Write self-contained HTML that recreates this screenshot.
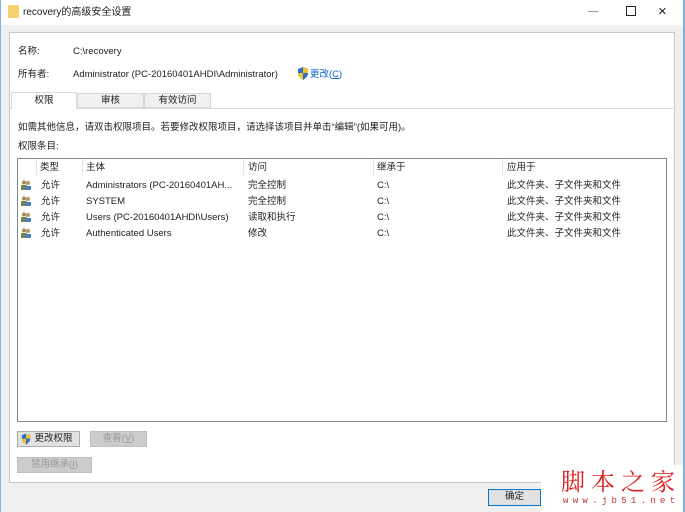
<!DOCTYPE html>
<html><head><meta charset="utf-8"><style>
*{margin:0;padding:0;box-sizing:border-box}
body{width:685px;height:512px;overflow:hidden;background:#f0f0f0;font-family:"Liberation Sans","Noto Sans CJK SC",sans-serif;font-size:9.5px;color:#222;position:relative}
.a{position:absolute;white-space:nowrap;line-height:15px}
.btn{position:absolute;border:1px solid #adadad;background:#e1e1e1;text-align:center;line-height:14px;font-size:9.5px}
.dis{color:#9a9a9a;background:#cccccc;border-color:#bfbfbf}
</style></head><body>
<div class="a" style="left:0;top:0;width:685px;height:25px;background:#fff"></div>
<div class="a" style="left:0;top:0;width:1px;height:512px;background:#7fb4e0"></div>
<div class="a" style="left:683px;top:0;width:2px;height:512px;background:#7fb4e0"></div>
<div class="a" style="left:8px;top:5px;width:11px;height:13px;background:#f5d06e;border-radius:1px"></div>
<div class="a" style="left:23px;top:5px;font-size:10px">recovery的高级安全设置</div>
<div class="a" style="left:588px;top:11px;width:10px;height:1px;background:#999"></div>
<div class="a" style="left:626px;top:6px;width:10px;height:10px;border:1px solid #222"></div>
<div class="a" style="left:658px;top:5px;font-size:15px;line-height:14px;color:#222">×</div>

<div class="a" style="left:9px;top:32px;width:666px;height:451px;background:#fff;border:1px solid #c8c8c8"></div>
<div class="a" style="left:18px;top:44px">名称:</div>
<div class="a" style="left:73px;top:44px">C:\recovery</div>
<div class="a" style="left:18px;top:67px">所有者:</div>
<div class="a" style="left:73px;top:67px">Administrator (PC-20160401AHDI\Administrator)</div>
<svg class="a" style="left:297px;top:67px" width="12" height="13" viewBox="0 0 12 13"><path d="M6 0L11 2V6C11 9 9 11 6 13C3 11 1 9 1 6V2Z" fill="#2a6fc9"/><path d="M6 0L11 2V6H6ZM6 6V13C3 11 1 9 1 6Z" fill="#f2c12e"/></svg>
<div class="a" style="left:310px;top:67px;color:#0a60c8">更改(<u>C</u>)</div>

<div class="a" style="left:10px;top:108px;width:665px;height:1px;background:#d9d9d9"></div>
<div class="a" style="left:11px;top:92px;width:66px;height:17px;background:#fff;border:1px solid #d9d9d9;border-bottom:none;text-align:center;line-height:15px">权限</div>
<div class="a" style="left:77px;top:93px;width:67px;height:15px;background:#f0f0f0;border:1px solid #d9d9d9;text-align:center;line-height:13px">审核</div>
<div class="a" style="left:144px;top:93px;width:67px;height:15px;background:#f0f0f0;border:1px solid #d9d9d9;text-align:center;line-height:13px">有效访问</div>

<div class="a" style="left:18px;top:120px">如需其他信息，请双击权限项目。若要修改权限项目，请选择该项目并单击“编辑”(如果可用)。</div>
<div class="a" style="left:18px;top:139px">权限条目:</div>

<div class="a" style="left:17px;top:158px;width:650px;height:264px;border:1px solid #828790;background:#fff"></div>
<div class="a" style="left:36px;top:159px;width:1px;height:16px;background:#e5e5e5"></div>
<div class="a" style="left:82px;top:159px;width:1px;height:16px;background:#e5e5e5"></div>
<div class="a" style="left:243px;top:159px;width:1px;height:16px;background:#e5e5e5"></div>
<div class="a" style="left:373px;top:159px;width:1px;height:16px;background:#e5e5e5"></div>
<div class="a" style="left:502px;top:159px;width:1px;height:16px;background:#e5e5e5"></div>
<div class="a" style="left:40px;top:160px">类型</div>
<div class="a" style="left:86px;top:160px">主体</div>
<div class="a" style="left:248px;top:160px">访问</div>
<div class="a" style="left:377px;top:160px">继承于</div>
<div class="a" style="left:507px;top:160px">应用于</div>

<div style="position:absolute;left:0;top:178px">
<svg class="a" style="left:20px;top:2px" width="12" height="10" viewBox="0 0 12 10"><circle cx="4" cy="2.5" r="2" fill="#a08a4a"/><rect x="1" y="5" width="6" height="5" fill="#6d8c4a"/><circle cx="8" cy="3" r="2" fill="#b59a5c"/><rect x="5" y="6" width="6" height="4" fill="#4f7fc0"/></svg>
<div class="a" style="left:41px;top:0">允许</div><div class="a" style="left:86px;top:0">Administrators (PC-20160401AH...</div><div class="a" style="left:248px;top:0">完全控制</div><div class="a" style="left:377px;top:0">C:\</div><div class="a" style="left:507px;top:0">此文件夹、子文件夹和文件</div>
</div>
<div style="position:absolute;left:0;top:194px">
<svg class="a" style="left:20px;top:2px" width="12" height="10" viewBox="0 0 12 10"><circle cx="4" cy="2.5" r="2" fill="#a08a4a"/><rect x="1" y="5" width="6" height="5" fill="#6d8c4a"/><circle cx="8" cy="3" r="2" fill="#b59a5c"/><rect x="5" y="6" width="6" height="4" fill="#4f7fc0"/></svg>
<div class="a" style="left:41px;top:0">允许</div><div class="a" style="left:86px;top:0">SYSTEM</div><div class="a" style="left:248px;top:0">完全控制</div><div class="a" style="left:377px;top:0">C:\</div><div class="a" style="left:507px;top:0">此文件夹、子文件夹和文件</div>
</div>
<div style="position:absolute;left:0;top:210px">
<svg class="a" style="left:20px;top:2px" width="12" height="10" viewBox="0 0 12 10"><circle cx="4" cy="2.5" r="2" fill="#a08a4a"/><rect x="1" y="5" width="6" height="5" fill="#6d8c4a"/><circle cx="8" cy="3" r="2" fill="#b59a5c"/><rect x="5" y="6" width="6" height="4" fill="#4f7fc0"/></svg>
<div class="a" style="left:41px;top:0">允许</div><div class="a" style="left:86px;top:0">Users (PC-20160401AHDI\Users)</div><div class="a" style="left:248px;top:0">读取和执行</div><div class="a" style="left:377px;top:0">C:\</div><div class="a" style="left:507px;top:0">此文件夹、子文件夹和文件</div>
</div>
<div style="position:absolute;left:0;top:226px">
<svg class="a" style="left:20px;top:2px" width="12" height="10" viewBox="0 0 12 10"><circle cx="4" cy="2.5" r="2" fill="#a08a4a"/><rect x="1" y="5" width="6" height="5" fill="#6d8c4a"/><circle cx="8" cy="3" r="2" fill="#b59a5c"/><rect x="5" y="6" width="6" height="4" fill="#4f7fc0"/></svg>
<div class="a" style="left:41px;top:0">允许</div><div class="a" style="left:86px;top:0">Authenticated Users</div><div class="a" style="left:248px;top:0">修改</div><div class="a" style="left:377px;top:0">C:\</div><div class="a" style="left:507px;top:0">此文件夹、子文件夹和文件</div>
</div>

<div class="btn" style="left:17px;top:431px;width:63px;height:16px;padding-left:10px">更改权限</div>
<svg class="a" style="left:21px;top:433px" width="10" height="12" viewBox="0 0 12 13"><path d="M6 0L11 2V6C11 9 9 11 6 13C3 11 1 9 1 6V2Z" fill="#2a6fc9"/><path d="M6 0L11 2V6H6ZM6 6V13C3 11 1 9 1 6Z" fill="#f2c12e"/></svg>
<div class="btn dis" style="left:90px;top:431px;width:57px;height:16px">查看(<u>V</u>)</div>
<div class="btn dis" style="left:17px;top:457px;width:75px;height:16px">禁用继承(<u>I</u>)</div>

<div class="btn" style="left:488px;top:489px;width:53px;height:17px;border-color:#0078d7;background:#e1e1e1">确定</div>
<div class="a" style="left:541px;top:465px;width:142px;height:47px;background:#fff"></div>
<div class="a" style="left:561px;top:466px;font-size:24px;line-height:28px;color:#e01b1b;font-family:'Noto Serif CJK SC',serif;letter-spacing:6px">脚本之家</div>
<div class="a" style="left:563px;top:496px;font-size:9px;line-height:10px;color:#c03030;letter-spacing:4.3px;font-family:'Liberation Mono',monospace">www.jb51.net</div>
</body></html>
